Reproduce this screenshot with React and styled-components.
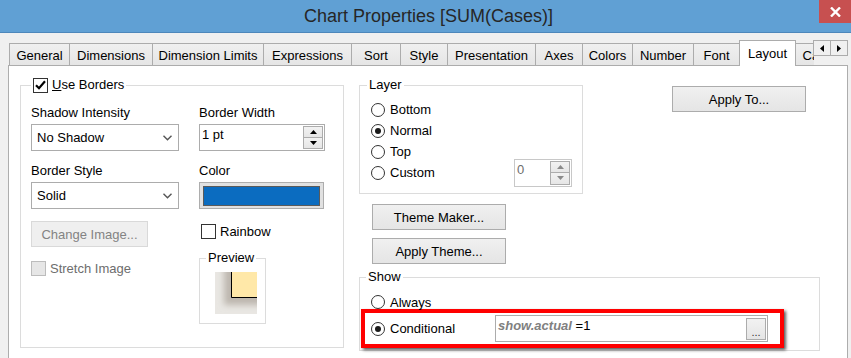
import React from "react";
import styled, { createGlobalStyle } from "styled-components";

const GlobalStyle = createGlobalStyle`
  html, body {
    margin: 0;
    padding: 0;
    background: #f0f0f0;
  }
  body {
    font-family: "Liberation Sans", Arial, sans-serif;
    font-size: 13px;
    color: #000;
  }
  * {
    box-sizing: border-box;
  }
`;

const Window = styled.div`
  width: 851px;
  height: 358px;
  overflow: hidden;
  display: flex;
  flex-direction: column;
  background: #f0f0f0;
`;

const TitleBar = styled.div`
  flex: none;
  height: 33px;
  background: #60a0d4;
  border-bottom: 1px solid #4d87bb;
  display: grid;
  grid-template-columns: 1fr auto 1fr;
  align-items: center;
`;

const Title = styled.div`
  grid-column: 2;
  padding-left: 6px;
  font-size: 18px;
  line-height: 32px;
  color: #262626;
  white-space: nowrap;
`;

const CloseButton = styled.div`
  grid-column: 3;
  justify-self: end;
  align-self: start;
  width: 32px;
  height: 23px;
  background: #c75050;
  display: flex;
  align-items: center;
  justify-content: center;
`;

const TabStrip = styled.div`
  position: relative;
  z-index: 1;
  flex: none;
  height: 26px;
  margin: 7px 3px -1px 8px;
  padding-left: 1px;
  display: flex;
`;

const Tabs = styled.div`
  flex: 1;
  min-width: 0;
  display: flex;
  align-items: flex-end;
  overflow: hidden;
`;

const Tab = styled.div`
  flex: none;
  width: ${({ $w }) => $w}px;
  height: ${({ $active }) => ($active ? 26 : 23)}px;
  margin-left: -1px;
  display: flex;
  align-items: center;
  justify-content: center;
  padding-top: ${({ $active }) => ($active ? 0 : 1)}px;
  white-space: nowrap;
  overflow: hidden;
  border: 1px solid #acacac;
  border-bottom: ${({ $active }) => ($active ? "none" : "1px solid #acacac")};
  background: ${({ $active }) =>
    $active ? "#fff" : "linear-gradient(#f0f0f0, #e5e5e5)"};
  &:first-child {
    margin-left: 0;
  }
`;

const TabScroll = styled.div`
  flex: none;
  display: flex;
  align-self: flex-start;
`;

const ScrollButton = styled.div`
  width: 18px;
  height: 16px;
  margin-left: -1px;
  border: 1px solid #acacac;
  background: #f0f0f0;
  display: flex;
  align-items: center;
  justify-content: center;
`;

const Panel = styled.div`
  flex: 1;
  margin: 0 3px 0 8px;
  padding: 11px 0 0 11px;
  background: #fff;
  border: 1px solid #adadad;
  border-bottom: none;
  display: flex;
  align-items: flex-start;
`;

const Group = styled.fieldset`
  flex: none;
  margin: ${({ $mt }) => $mt || 0}px 0 0 0;
  padding: 0;
  min-width: 0;
  width: ${({ $w }) => $w}px;
  height: ${({ $h }) => $h}px;
  border: 1px solid #dcdcdc;
`;

const Legend = styled.legend`
  margin-left: ${({ $indent }) => $indent}px;
  padding: 0 2px;
  line-height: 16px;
`;

const LegendInner = styled.span`
  display: inline-flex;
  align-items: center;
  gap: 4px;
`;

const BordersBody = styled.div`
  padding: 11px 0 0 10px;
  display: grid;
  grid-template-columns: 148px 126px;
  column-gap: 20px;
`;

const Column = styled.div`
  display: flex;
  flex-direction: column;
  align-items: flex-start;
`;

const FieldLabel = styled.div`
  line-height: 16px;
  margin-top: ${({ $mt }) => $mt || 0}px;
  white-space: nowrap;
`;

const Select = styled.div`
  width: 148px;
  height: 27px;
  margin-top: 3px;
  padding: 0 6px 0 5px;
  border: 1px solid #acacac;
  background: #fff;
  display: flex;
  align-items: center;
  justify-content: space-between;
`;

const Spinner = styled.div`
  width: ${({ $w }) => $w}px;
  height: ${({ $h }) => $h}px;
  margin-top: ${({ $mt }) => $mt || 0}px;
  margin-left: ${({ $ml }) => $ml || 0};
  border: 1px solid ${({ $muted }) => ($muted ? "#c8c8c8" : "#acacac")};
  background: #fff;
  display: flex;
  justify-content: space-between;
`;

const SpinText = styled.div`
  padding: 2px 0 0 2px;
  line-height: 16px;
  color: ${({ $muted }) => ($muted ? "#6d6d6d" : "#000")};
`;

const SpinButtons = styled.div`
  width: 20px;
  margin: 1px 1px 1px 0;
  display: flex;
  flex-direction: column;
`;

const SpinButton = styled.div`
  flex: 1;
  border: 1px solid #acacac;
  border-top: ${({ $lower }) => ($lower ? "none" : "1px solid #acacac")};
  background: linear-gradient(#f2f2f2, #e6e6e6);
  display: flex;
  align-items: center;
  justify-content: center;
`;

const ColorButton = styled.div`
  width: 125px;
  height: 27px;
  margin-top: 3px;
  padding: 3px 3px 2px 3px;
  border: 1px solid #adadad;
  background: #e1e1e1;
`;

const Swatch = styled.div`
  width: 100%;
  height: 100%;
  background: ${({ $color }) => $color};
  border: 1px solid #5a5a5a;
`;

const Button = styled.div`
  width: ${({ $w }) => $w}px;
  height: 26px;
  margin: ${({ $m }) => $m || 0};
  flex: none;
  display: flex;
  align-items: center;
  justify-content: center;
  white-space: nowrap;
  border: 1px solid ${({ $disabled }) => ($disabled ? "#d9d9d9" : "#acacac")};
  background: ${({ $disabled }) =>
    $disabled ? "#efefef" : "linear-gradient(#f0f0f0, #e5e5e5)"};
  color: ${({ $disabled }) => ($disabled ? "#838383" : "#000")};
`;

const CheckRow = styled.div`
  display: flex;
  align-items: center;
  gap: 4px;
  height: 16px;
  margin-top: ${({ $mt }) => $mt || 0}px;
  margin-left: ${({ $ml }) => $ml || 0}px;
  color: ${({ $disabled }) => ($disabled ? "#6d6d6d" : "#000")};
  white-space: nowrap;
`;

const Box = styled.span`
  flex: none;
  width: 15px;
  height: 15px;
  display: inline-flex;
  align-items: center;
  justify-content: center;
  border: 1px solid ${({ $disabled }) => ($disabled ? "#bcbcbc" : "#333")};
  background: ${({ $disabled }) => ($disabled ? "#e6e6e6" : "#fff")};
`;

const PreviewBody = styled.div`
  padding: 6px 0 0 15px;
  line-height: 0;
`;

const RightColumn = styled.div`
  margin-left: 15px;
  display: flex;
  flex-direction: column;
  align-items: flex-start;
`;

const TopRow = styled.div`
  display: flex;
  align-items: flex-start;
`;

const LayerBody = styled.div`
  padding: 6px 10px 0 11px;
  display: flex;
  flex-direction: column;
`;

const RadioRow = styled.div`
  display: flex;
  align-items: center;
  gap: 5px;
  height: ${({ $h }) => $h || 21}px;
  padding-left: ${({ $pl }) => $pl || 0}px;
  white-space: nowrap;
`;

const Radio = styled.span`
  flex: none;
  width: 14px;
  height: 14px;
  border-radius: 50%;
  border: 1px solid #333;
  background: #fff;
  display: inline-flex;
  align-items: center;
  justify-content: center;
  &::after {
    content: "";
    display: ${({ $checked }) => ($checked ? "block" : "none")};
    width: 6px;
    height: 6px;
    border-radius: 50%;
    background: #1a1a1a;
  }
`;

const ShowBody = styled.div`
  padding: 10px 0 0 1px;
`;

const Highlight = styled.div`
  width: 423px;
  height: 39px;
  padding: 0 12px 0 6px;
  border: 4px solid #ff0000;
  box-shadow: 2px 2px 3px rgba(0, 0, 0, 0.65);
  display: flex;
  align-items: center;
  gap: 5px;
`;

const ExprInput = styled.div`
  width: 273px;
  height: 27px;
  margin-left: auto;
  padding: 2px 1px 0 2px;
  border: 1px solid #acacac;
  background: #fff;
  display: flex;
  align-items: flex-start;
  justify-content: space-between;
`;

const ExprText = styled.span`
  line-height: 16px;
  white-space: nowrap;
`;

const ExprVar = styled.span`
  font-weight: bold;
  font-style: italic;
  color: #808080;
`;

const DotsButton = styled.div`
  width: 20px;
  height: 22px;
  border: 1px solid #acacac;
  background: linear-gradient(#f2f2f2, #e5e5e5);
  display: flex;
  align-items: flex-end;
  justify-content: center;
  font-size: 11px;
  line-height: 14px;
  color: #333;
`;

const tabs = [
  ["General", 61],
  ["Dimensions", 84],
  ["Dimension Limits", 112],
  ["Expressions", 89],
  ["Sort", 50],
  ["Style", 48],
  ["Presentation", 89],
  ["Axes", 48],
  ["Colors", 51],
  ["Number", 62],
  ["Font", 47],
  ["Layout", 57, true],
  ["Caption", 60],
];

const Chevron = () => (
  <svg width="9" height="6" viewBox="0 0 9 6">
    <path d="M0.5 0.8L4.5 4.8L8.5 0.8" stroke="#555" strokeWidth="1.4" fill="none" />
  </svg>
);

const Tri = ({ down, color = "#000" }) => (
  <svg width="7" height="4" viewBox="0 0 7 4">
    <path d={down ? "M0 0H7L3.5 4Z" : "M0 4H7L3.5 0Z"} fill={color} />
  </svg>
);

const Arrow = ({ right }) => (
  <svg width="4" height="7" viewBox="0 0 4 7">
    <path d={right ? "M0 0L4 3.5L0 7Z" : "M4 0L0 3.5L4 7Z"} fill="#000" />
  </svg>
);

function SpinBox({ value, muted, w, h, mt, ml }) {
  const c = muted ? "#8a8a8a" : "#000";
  return (
    <Spinner $w={w} $h={h} $mt={mt} $ml={ml} $muted={muted}>
      <SpinText $muted={muted}>{value}</SpinText>
      <SpinButtons>
        <SpinButton>
          <Tri color={c} />
        </SpinButton>
        <SpinButton $lower>
          <Tri down color={c} />
        </SpinButton>
      </SpinButtons>
    </Spinner>
  );
}

function Check({ checked, disabled }) {
  return (
    <Box $disabled={disabled}>
      {checked && (
        <svg width="11" height="10" viewBox="0 0 11 10">
          <path d="M1 5.2L4 8.2L10 1.2" stroke="#000" strokeWidth="2.2" fill="none" />
        </svg>
      )}
    </Box>
  );
}

const PreviewImage = () => (
  <svg width="42" height="42" viewBox="0 0 42 42">
    <defs>
      <filter id="pvblur" x="-50%" y="-50%" width="200%" height="200%">
        <feGaussianBlur stdDeviation="3" />
      </filter>
    </defs>
    <rect width="42" height="42" fill="#e9e7e3" />
    <rect x="9" y="-8" width="40" height="41" fill="#bdb7af" filter="url(#pvblur)" />
    <rect x="16" y="0" width="26" height="25" fill="#ffe8a8" />
    <path d="M16.5 0V25.5H42" stroke="#000" strokeWidth="1" fill="none" />
  </svg>
);

export default function App() {
  return (
    <Window>
      <GlobalStyle />
      <TitleBar>
        <Title>Chart Properties [SUM(Cases)]</Title>
        <CloseButton>
          <svg width="11" height="10" viewBox="0 0 11 10">
            <path d="M1 0.5L10 9.5M10 0.5L1 9.5" stroke="#fff" strokeWidth="2.4" />
          </svg>
        </CloseButton>
      </TitleBar>

      <TabStrip>
        <Tabs>
          {tabs.map(([label, w, active]) => (
            <Tab key={label} $w={w} $active={active}>
              {label}
            </Tab>
          ))}
        </Tabs>
        <TabScroll>
          <ScrollButton>
            <Arrow />
          </ScrollButton>
          <ScrollButton>
            <Arrow right />
          </ScrollButton>
        </TabScroll>
      </TabStrip>

      <Panel>
        <Group $w={324} $h={271}>
          <Legend $indent={10}>
            <LegendInner>
              <Check checked />
              <span>
                <u>U</u>se Borders
              </span>
            </LegendInner>
          </Legend>
          <BordersBody>
            <Column>
              <FieldLabel>Shadow Intensity</FieldLabel>
              <Select>
                <span>No Shadow</span>
                <Chevron />
              </Select>
              <FieldLabel $mt={12}>Border Style</FieldLabel>
              <Select>
                <span>Solid</span>
                <Chevron />
              </Select>
              <Button $w={117} $m="12px 0 0 0" $disabled>
                Change Image...
              </Button>
              <CheckRow $mt={13} $disabled>
                <Check disabled />
                Stretch Image
              </CheckRow>
            </Column>
            <Column>
              <FieldLabel>Border Width</FieldLabel>
              <SpinBox value="1 pt" w={126} h={27} mt={3} />
              <FieldLabel $mt={12}>Color</FieldLabel>
              <ColorButton>
                <Swatch $color="#0b6cc0" />
              </ColorButton>
              <CheckRow $mt={14} $ml={2}>
                <Check />
                Rainbow
              </CheckRow>
              <Group $w={67} $h={74} $mt={11}>
                <Legend $indent={6}>Preview</Legend>
                <PreviewBody>
                  <PreviewImage />
                </PreviewBody>
              </Group>
            </Column>
          </BordersBody>
        </Group>

        <RightColumn>
          <TopRow>
            <Group $w={224} $h={117}>
              <Legend $indent={7}>Layer</Legend>
              <LayerBody>
                <RadioRow>
                  <Radio />
                  Bottom
                </RadioRow>
                <RadioRow>
                  <Radio $checked />
                  Normal
                </RadioRow>
                <RadioRow>
                  <Radio />
                  Top
                </RadioRow>
                <RadioRow>
                  <Radio />
                  Custom
                  <SpinBox value="0" muted w={58} h={28} ml="auto" />
                </RadioRow>
              </LayerBody>
            </Group>
            <Button $w={134} $m="9px 0 0 89px">
              Apply To...
            </Button>
          </TopRow>
          <Button $w={134} $m="10px 0 0 13px">
            Theme Maker...
          </Button>
          <Button $w={134} $m="8px 0 0 13px">
            Apply Theme...
          </Button>
          <Group $w={461} $h={82} $mt={5}>
            <Legend $indent={6}>Show</Legend>
            <ShowBody>
              <RadioRow $h={14} $pl={10}>
                <Radio />
                Always
              </RadioRow>
              <Highlight>
                <Radio $checked />
                Conditional
                <ExprInput>
                  <ExprText>
                    <ExprVar>show.actual</ExprVar> =1
                  </ExprText>
                  <DotsButton>...</DotsButton>
                </ExprInput>
              </Highlight>
            </ShowBody>
          </Group>
        </RightColumn>
      </Panel>
    </Window>
  );
}
